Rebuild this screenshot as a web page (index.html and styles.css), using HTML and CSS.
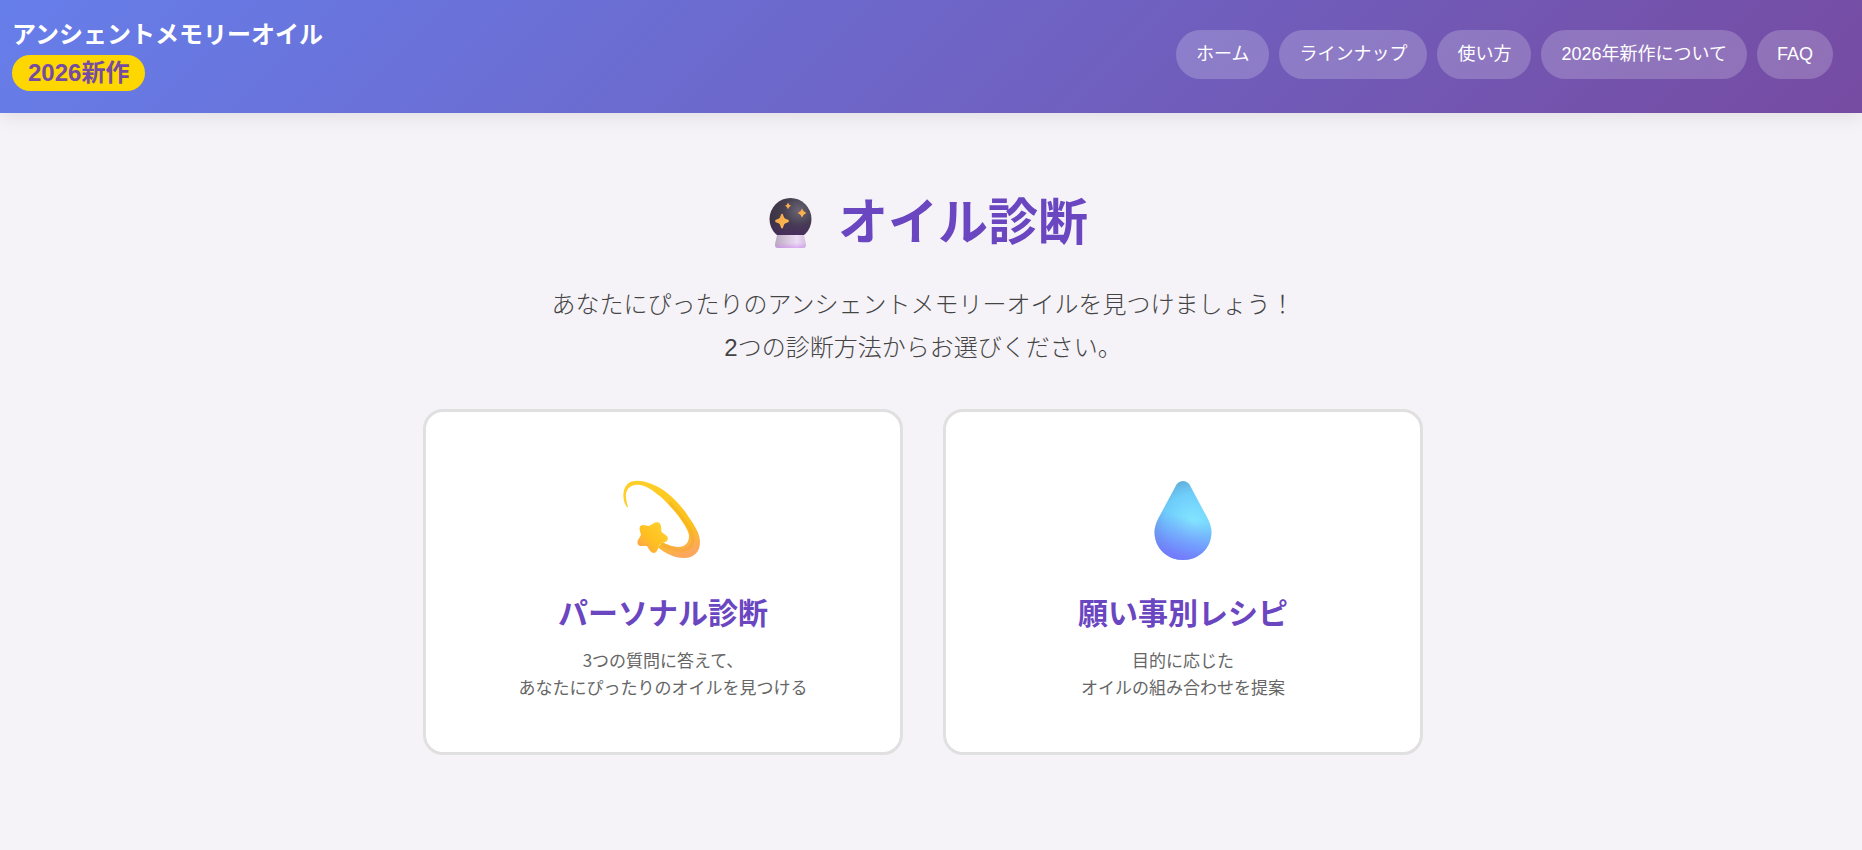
FILE: index.html
```html
<!DOCTYPE html>
<html lang="ja">
  <head>
    <meta charset="UTF-8" />
    <meta name="viewport" content="width=device-width, initial-scale=1.0" />
    <title>オイル診断 | アンシェントメモリーオイル</title>
    <link rel="stylesheet" href="styles.css">
  </head>
  <body>
    <header class="header">
      <div class="logo">
        <span class="logo-name">アンシェントメモリーオイル</span>
        <span class="logo-badge">2026新作</span>
      </div>
      <nav class="nav">
        <a href="#">ホーム</a>
        <a href="#">ラインナップ</a>
        <a href="#">使い方</a>
        <a href="#">2026年新作について</a>
        <a href="#">FAQ</a>
      </nav>
    </header>

    <main class="diagnosis">
      <h1 class="diagnosis-title">
        <!-- 水晶玉 -->
        <svg class="title-icon" viewBox="0 0 66 50" aria-hidden="true">
          <defs>
            <radialGradient id="ball" cx="0.7" cy="0.3" r="0.8">
              <stop offset="0" stop-color="#6a6474" />
              <stop offset="0.45" stop-color="#463f50" />
              <stop offset="1" stop-color="#38303f" />
            </radialGradient>
            <linearGradient id="ballGlow" x1="0" y1="0" x2="0" y2="1">
              <stop offset="0.5" stop-color="#4e2a6c" stop-opacity="0" />
              <stop offset="1" stop-color="#4e2a6c" stop-opacity="0.8" />
            </linearGradient>
            <linearGradient id="base" x1="0" y1="0" x2="1" y2="0">
              <stop offset="0" stop-color="#b9aabf" />
              <stop offset="0.7" stop-color="#eedcf6" />
              <stop offset="1" stop-color="#d5bfe0" />
            </linearGradient>
            <linearGradient id="baseGlow" x1="0" y1="0" x2="0" y2="1">
              <stop offset="0.6" stop-color="#cf8df0" stop-opacity="0" />
              <stop offset="1" stop-color="#cf8df0" stop-opacity="0.6" />
            </linearGradient>
            <linearGradient id="spark" x1="0" y1="0" x2="1" y2="1">
              <stop offset="0" stop-color="#f5a04c" />
              <stop offset="1" stop-color="#ffc04e" />
            </linearGradient>
          </defs>
          <circle cx="32.5" cy="21" r="21" fill="url(#ball)" />
          <circle cx="32.5" cy="21" r="21" fill="url(#ballGlow)" />
          <path d="M19 37H46C46.500 41 48 44 48 47Q48 50 45 50H20Q17 50 17 47C17 44 18.500 41 19 37Z" fill="url(#base)" />
          <path d="M19 37H46C46.500 41 48 44 48 47Q48 50 45 50H20Q17 50 17 47C17 44 18.500 41 19 37Z" fill="url(#baseGlow)" />
          <g fill="url(#spark)">
            <path d="M24 15.500Q25 15.500 25.500 18Q26 20.500 28 21Q31 21.700 31 23Q31 24.300 28 25Q26 25.500 25.500 28Q25 30.500 24 30.500Q23 30.500 22.500 28Q22 25.500 20 25Q17 24.300 17 23Q17 21.700 20 21Q22 20.500 22.500 18Q23 15.500 24 15.500Z" />
            <path d="M30 4.500Q30.600 7 33.200 7.800Q30.600 8.600 30 11.200Q29.400 8.600 27 7.800Q29.400 7 30 4.500Z" />
            <path d="M44 10.500Q45 14 48.300 15Q45 16 44 19.500Q43 16 39.700 15Q43 14 44 10.500Z" />
          </g>
        </svg>
        オイル診断
      </h1>
      <p class="diagnosis-lead">
        あなたにぴったりのアンシェントメモリーオイルを見つけましょう！<br />
        2つの診断方法からお選びください。
      </p>

      <div class="card-grid">
        <button type="button" class="card">
          <!-- 流れ星 -->
          <svg class="card-icon" viewBox="0 0 80 80" aria-hidden="true">
            <defs>
              <linearGradient id="trail" x1="0.3" y1="0" x2="0.7" y2="1">
                <stop offset="0" stop-color="#ffcf28" />
                <stop offset="0.7" stop-color="#fcc01c" />
                <stop offset="1" stop-color="#fca75e" />
              </linearGradient>
              <linearGradient id="star" x1="0.8" y1="0.2" x2="0.1" y2="0.9">
                <stop offset="0" stop-color="#ffcc2c" />
                <stop offset="0.5" stop-color="#ffc01f" />
                <stop offset="1" stop-color="#ffa54d" />
              </linearGradient>
            </defs>
            <path d="M4 27C1 23 0 18 0.500 13C1.500 5 6 0.700 14 0.700C22 0.700 30 4 37 8C43 11.500 48 16 53 21C58 26 62 31 66 37.500C72 46 77 54 77 62C77 72 71 78 61 78C51 78 42 73 35 67.500L39 62C45 65 50 66.700 55 66.900C62 67 66 63 66 56C66 51 60 42 53 33C47 26 40 18 34 14C28 9 22 5 15 4.700C8 4.500 4 8 3 14C2.500 18 3.500 22 5 26.500Q4.800 27.500 4 27Z" fill="url(#trail)" />
            <path d="M46 22C60 37 70 50 70 60C69.500 69 61 71.500 53 69.500C47 68.500 43 67 39 64.500" fill="none" stroke="#f0a028" stroke-opacity="0.3" stroke-width="3" />
            <path d="M20 45L26 46L32 42.500Q37 41 38 46L38.500 52L44 56Q46.500 60 42 62L37 64L34 71Q31 75 27 71L24 66L17 66Q13 64 15 60L18 55L16.500 49Q16.500 45 20 45Z" fill="url(#star)" />
          </svg>
          <span class="card-title">パーソナル診断</span>
          <span class="card-text">3つの質問に答えて、<br />あなたにぴったりのオイルを見つける</span>
        </button>

        <button type="button" class="card">
          <!-- しずく -->
          <svg class="card-icon" viewBox="0 0 80 80" aria-hidden="true">
            <defs>
              <radialGradient id="drop" gradientUnits="userSpaceOnUse" cx="50" cy="42" r="48">
                <stop offset="0" stop-color="#83e6ff" />
                <stop offset="0.6" stop-color="#6fcdfb" />
                <stop offset="1" stop-color="#5ba5cd" />
              </radialGradient>
              <linearGradient id="dropBottom" x1="0.6" y1="0" x2="0.4" y2="1">
                <stop offset="0.45" stop-color="#7478ff" stop-opacity="0" />
                <stop offset="0.7" stop-color="#7478ff" stop-opacity="0.45" />
                <stop offset="1" stop-color="#7478ff" />
              </linearGradient>
            </defs>
            <path d="M33.500 4.500Q36 1 40 1T46.500 4.500L65 39C67 43 68.500 48 68.500 52C68.500 68 56 80 40 80S11.500 68 11.500 52C11.500 48 13 43 15 39Z" fill="url(#drop)" />
            <path d="M33.500 4.500Q36 1 40 1T46.500 4.500L65 39C67 43 68.500 48 68.500 52C68.500 68 56 80 40 80S11.500 68 11.500 52C11.500 48 13 43 15 39Z" fill="url(#dropBottom)" />
          </svg>
          <span class="card-title">願い事別レシピ</span>
          <span class="card-text">目的に応じた<br />オイルの組み合わせを提案</span>
        </button>
      </div>
    </main>
  </body>
</html>
```
FILE: styles.css
```css
:root {
  --primary: #6b46c1;
  --bg: #f5f3f8;
  --gold: #ffd700;
  --text: #444444;
  --text-light: #666666;
  --border: #e0e0e0;
}

* {
  box-sizing: border-box;
}

body {
  margin: 0;
  min-height: 100vh;
  font-family: "Liberation Sans", "Noto Sans CJK JP", sans-serif;
  color: var(--text);
  background: var(--bg);
}

/* ヘッダー */
.header {
  display: flex;
  justify-content: space-between;
  align-items: center;
  padding: 18px 29px 22px 12px;
  background: linear-gradient(135deg, #667eea 0%, #764ba2 100%);
  box-shadow: 0 2px 20px rgba(0, 0, 0, 0.1);
}

.logo {
  display: flex;
  flex-direction: column;
  align-items: flex-start;
  gap: 3px;
  font-size: 24px;
  font-weight: 700;
  color: white;
}

.logo-name {
  line-height: 34px;
}

.logo-badge {
  padding: 0 16px;
  line-height: 36px;
  border-radius: 18px;
  background: var(--gold);
  color: #764ba2;
}

.nav {
  display: flex;
  flex-wrap: wrap;
  gap: 10px;
}

.nav a {
  padding: 11px 20px;
  border-radius: 25px;
  background: rgba(255, 255, 255, 0.2);
  color: white;
  font-size: 18px;
  line-height: 27px;
  text-decoration: none;
}

.nav a:hover {
  background: rgba(255, 255, 255, 0.3);
}

/* 診断セクション */
.diagnosis {
  padding: 74px 16px 80px 0;
  text-align: center;
}

.diagnosis-title {
  display: flex;
  justify-content: center;
  align-items: center;
  gap: 14px;
  margin: 0 0 24px;
  color: var(--primary);
  font-size: 50px;
  line-height: 72px;
}

.title-icon {
  width: 66px;
  height: 50px;
}

.diagnosis-lead {
  margin: 0 0 40px;
  font-size: 24px;
  font-weight: 300;
  line-height: 43px;
}

/* カード */
.card-grid {
  display: grid;
  grid-template-columns: repeat(2, 1fr);
  gap: 40px;
  max-width: 1000px;
  margin: 0 auto;
}

.card {
  display: flex;
  flex-direction: column;
  align-items: center;
  padding: 68px 40px 52px;
  border: 3px solid var(--border);
  border-radius: 20px;
  background: white;
  font-family: "Noto Sans CJK JP", sans-serif;
  cursor: pointer;
}

.card:hover {
  border-color: var(--primary);
}

.card-icon {
  width: 80px;
  height: 80px;
  margin-bottom: 28px;
}

.card-title {
  margin-bottom: 12px;
  color: var(--primary);
  font-size: 30px;
  font-weight: 700;
  line-height: 46px;
}

.card-text {
  color: var(--text-light);
  font-size: 17px;
  line-height: 27px;
}

@media (max-width: 768px) {
  .header {
    flex-direction: column;
    gap: 16px;
  }
  .diagnosis {
    padding: 40px 16px;
  }
  .card-grid {
    grid-template-columns: 1fr;
  }
}
```
